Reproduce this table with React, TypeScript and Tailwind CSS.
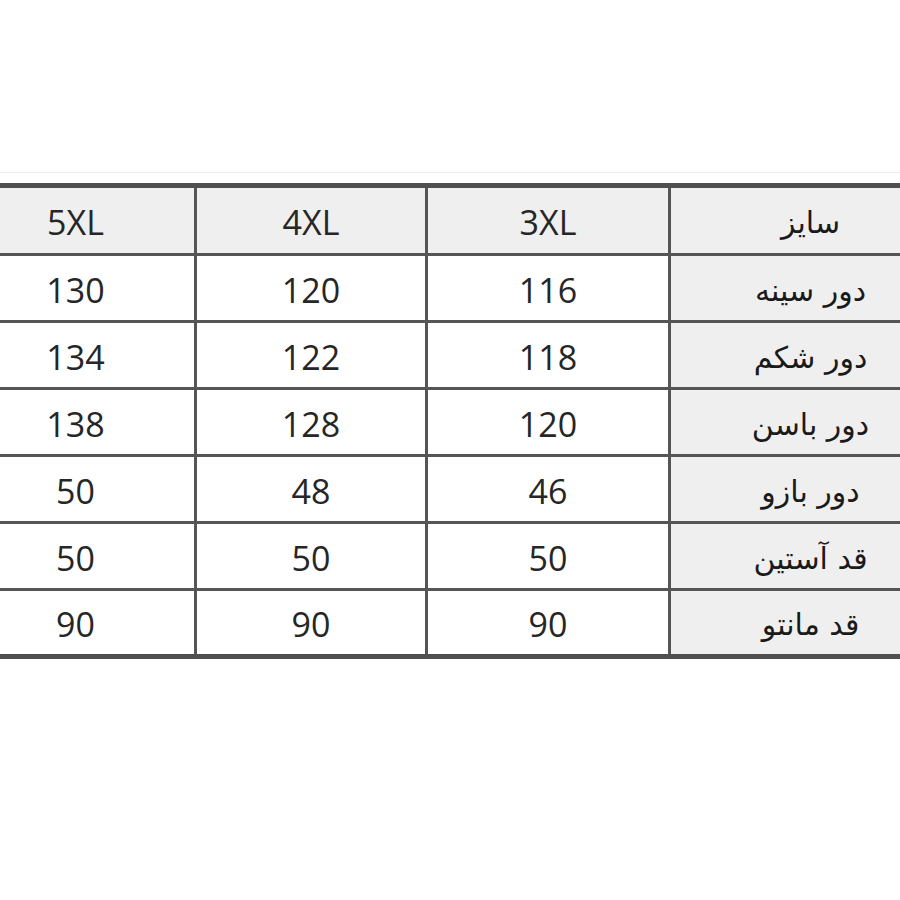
const sizes = ['5XL', '4XL', '3XL'];

const rows: { label: string; values: string[] }[] = [
  { label: 'دور سینه', values: ['130', '120', '116'] },
  { label: 'دور شکم', values: ['134', '122', '118'] },
  { label: 'دور باسن', values: ['138', '128', '120'] },
  { label: 'دور بازو', values: ['50', '48', '46'] },
  { label: 'قد آستین', values: ['50', '50', '50'] },
  { label: 'قد مانتو', values: ['90', '90', '90'] },
];

const numFont = "font-['Open_Sans',sans-serif]";
const faFont = "font-['DejaVu_Sans','Noto_Sans',sans-serif]";

function Row({ label, values, header }: { label: string; values: string[]; header?: boolean }) {
  const cellBg = header ? 'bg-[#efefef]' : 'bg-white';
  const num = `${cellBg} flex items-center justify-center pt-1 text-[34px] font-medium text-[#262626] ${numFont}`;
  return (
    <div
      className={`grid grid-cols-[237px_231px_243px_282px] ${
        header ? 'h-[68px]' : 'h-[67px]'
      } border-b-[3px] border-[#555555] last:h-[63px] last:border-b-0`}
    >
      <div className={num}>{values[0]}</div>
      <div className={`${num} border-l-[3px] border-[#555555]`}>{values[1]}</div>
      <div className={`${num} border-l-[3px] border-[#555555]`}>{values[2]}</div>
      <div
        dir="rtl"
        className={`bg-[#efefef] border-l-[3px] border-[#555555] flex items-center justify-center pt-1 text-[30px] text-[#1a1a1a] ${faFont}`}
      >
        {label}
      </div>
    </div>
  );
}

export default function App() {
  return (
    <div className="w-[900px] h-[900px] bg-white overflow-hidden">
      <div className="mt-[172px] h-px bg-[#ececec]" />
      <div className="mt-[10px] w-[900px] overflow-hidden">
        <div className="-ml-[43px] w-[993px] border-t-[5px] border-b-[5px] border-[#4f4f4f] flex flex-col">
          <Row header label="سایز" values={sizes} />
          {rows.map((r) => (
            <Row key={r.label} label={r.label} values={r.values} />
          ))}
        </div>
      </div>
    </div>
  );
}
